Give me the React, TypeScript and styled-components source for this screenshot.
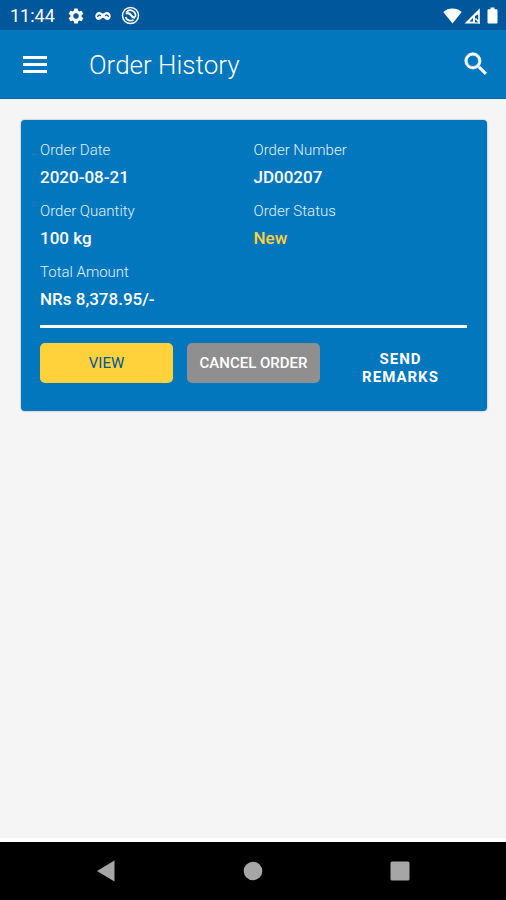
import React from "react";
import styled, { createGlobalStyle } from "styled-components";

const colors = {
  primary: "#0277bd",
  primaryDark: "#01579b",
  accent: "#ffd13b",
  page: "#f5f5f5",
  muted: "#8f8f8f",
  label: "#e1f1fc",
};

const GlobalStyle = createGlobalStyle`
  * { box-sizing: border-box; }
  body { margin: 0; background: ${colors.page}; font-family: Roboto, sans-serif; }
  button { font-family: inherit; cursor: pointer; }
`;

const Screen = styled.div`
  min-height: 100vh;
  display: flex;
  flex-direction: column;
  background: ${colors.page};
`;

const StatusBar = styled.div`
  height: 30px;
  flex: none;
  display: flex;
  align-items: center;
  justify-content: space-between;
  padding: 1px 8px 0 10px;
  color: #fff;
  background: ${colors.primaryDark};
`;

const StatusGroup = styled.div<{ $gap: number }>`
  display: flex;
  align-items: center;
  gap: ${(p) => p.$gap}px;
  svg { display: block; }
`;

const Clock = styled.time`
  font-size: 18px;
  line-height: 20px;
  margin-right: 2px;
`;

const AppBar = styled.header`
  flex: none;
  display: flex;
  align-items: center;
  height: 69px;
  padding: 0 15px 0 20px;
  color: #fff;
  background: ${colors.primary};
  border-bottom: 1px solid #0565a8;
`;

const Title = styled.h1`
  flex: 1;
  margin: 2px 0 0 39px;
  font-size: 26px;
  line-height: 32px;
  font-weight: 300;
`;

const IconButton = styled.button`
  padding: 0;
  border: 0;
  background: none;
  color: inherit;
  svg { display: block; }
`;

const Content = styled.main`
  flex: 1;
  padding: 21px 19px 20px 21px;
`;

const Card = styled.article`
  padding: 19px 20px 25px 19px;
  border-radius: 4px;
  color: #fff;
  background: ${colors.primary};
  box-shadow: 0 0 2px rgba(0, 0, 0, 0.4);
`;

const Fields = styled.dl`
  display: grid;
  grid-template-columns: 1fr 1fr;
  row-gap: 11px;
  margin: 0;
`;

const Label = styled.dt`
  font-size: 15px;
  line-height: 22px;
  margin-bottom: 4px;
  font-weight: 300;
  color: ${colors.label};
`;

const Value = styled.dd<{ $highlight?: boolean }>`
  margin: 0;
  font-size: 17px;
  line-height: 24px;
  font-weight: 500;
  color: ${(p) => (p.$highlight ? colors.accent : "#fff")};
`;

const Divider = styled.hr`
  height: 3px;
  margin: 14px 0 15px;
  border: 0;
  background: #fff;
`;

const Actions = styled.div`
  display: grid;
  grid-template-columns: repeat(3, minmax(0, 1fr));
  align-items: start;
  gap: 14px;
`;

const ActionButton = styled.button<{ $kind: "accent" | "muted" | "text" }>`
  min-height: 40px;
  padding: ${(p) => (p.$kind === "text" ? "7px 16px 0" : "0")};
  border: 0;
  border-radius: 5px;
  font-size: 15px;
  line-height: 18px;
  text-transform: uppercase;
  font-weight: ${(p) => (p.$kind === "accent" ? 400 : p.$kind === "muted" ? 500 : 700)};
  letter-spacing: ${(p) => (p.$kind === "text" ? "1px" : "normal")};
  color: ${(p) => (p.$kind === "accent" ? colors.primaryDark : "#fff")};
  background: ${(p) =>
    p.$kind === "accent" ? colors.accent : p.$kind === "muted" ? colors.muted : "transparent"};
`;

const NavBar = styled.nav`
  flex: none;
  display: grid;
  grid-template-columns: repeat(3, 1fr);
  place-items: center;
  height: 62px;
  padding: 0 33px;
  border-top: 4px solid #fff;
  background: #000;
  color: #a6a6a6;
`;

const GearIcon = () => (
  <svg width="18" height="18" viewBox="0 0 24 24" fill="currentColor" aria-hidden="true">
    <path d="M19.4 13a7.5 7.5 0 0 0 0-2l2.1-1.6a.5.5 0 0 0 .1-.7l-2-3.4a.5.5 0 0 0-.6-.2l-2.5 1a7.3 7.3 0 0 0-1.7-1l-.4-2.6a.5.5 0 0 0-.5-.5h-4a.5.5 0 0 0-.4.5l-.4 2.6a8 8 0 0 0-1.7 1l-2.5-1a.5.5 0 0 0-.6.2l-2 3.4a.5.5 0 0 0 .1.7L4.6 11a7.5 7.5 0 0 0 0 2l-2.1 1.6a.5.5 0 0 0-.1.7l2 3.4a.5.5 0 0 0 .6.2l2.5-1a7.3 7.3 0 0 0 1.7 1l.4 2.6c0 .3.2.5.5.5h4c.2 0 .4-.2.4-.5l.4-2.6a7.3 7.3 0 0 0 1.7-1l2.5 1c.2.1.5 0 .6-.2l2-3.4a.5.5 0 0 0-.1-.7zM12 15.6a3.6 3.6 0 1 1 0-7.2 3.6 3.6 0 0 1 0 7.2z" />
  </svg>
);

const LoopIcon = () => (
  <svg width="16" height="12" viewBox="0 0 16 12" aria-hidden="true">
    <path
      d="M4.300 2C6 2 7 3.400 8 3.400S10 2 11.700 2C14 2 15.700 3.800 15.700 6.200S14 10 12.200 10C10 10 9 7.800 8 7.800S6 10 3.800 10C2 10 .3 8.600.3 6.200S2 2 4.300 2z"
      fill="currentColor"
    />
    <path d="M2.600 7c.3-2 2.200-2.500 3.200-1M13.400 7c-.3-2-2.200-2.500-3.200-1" stroke={colors.primaryDark} strokeWidth="1.200" fill="none" />
  </svg>
);

const SwirlIcon = () => (
  <svg width="19" height="19" viewBox="0 0 19 19" fill="none" stroke="currentColor" aria-hidden="true">
    <circle cx="9.500" cy="9.500" r="8" strokeWidth="1.500" />
    <path d="M5.300 6.200a5.200 5.200 0 0 1 8.900 5M12.500 13.700a5.200 5.200 0 0 1-8-2.700" strokeWidth="1.700" />
    <path d="M4.800 7.500c2.500-.8 4.500.2 5.500 2s2 2.200 3.700 2" strokeWidth="2.200" />
  </svg>
);

const WifiIcon = () => (
  <svg width="19" height="16" viewBox="0 0 19 16" fill="currentColor" aria-label="Wi-Fi" role="img">
    <path d="M9.500 15.500.3 4C3 1.700 6 .6 9.500.6S16 1.700 18.700 4z" />
  </svg>
);

const SignalIcon = () => (
  <svg width="17" height="16" viewBox="0 0 17 16" aria-label="Mobile signal" role="img">
    <path d="M.5 15.500 15.800.3v5.200L11 8v7.500z" fill="currentColor" />
    <path d="M5.500 13.600h3.500V10z" fill={colors.primaryDark} />
    <path d="M15 5.500V14l-3.500-3.500" stroke="currentColor" strokeWidth="1.600" fill="none" />
    <path d="M11 15h5" stroke="currentColor" strokeWidth="1.200" />
  </svg>
);

const BatteryIcon = () => (
  <svg width="11" height="17" viewBox="0 0 11 17" fill="currentColor" aria-label="Battery" role="img">
    <path d="M3.500.5h4v1.700h1.700c.8 0 1.300.5 1.300 1.300v11.700c0 .8-.5 1.300-1.300 1.300H1.800c-.8 0-1.300-.5-1.300-1.300V3.500c0-.8.5-1.300 1.300-1.300h1.700z" />
  </svg>
);

const MenuIcon = () => (
  <svg width="30" height="30" viewBox="0 0 30 30" fill="currentColor" aria-hidden="true">
    <path d="M3 7h24v3H3zM3 14h24v3H3zM3 21h24v3H3z" />
  </svg>
);

const SearchIcon = () => (
  <svg width="30" height="30" viewBox="0 0 24 24" fill="currentColor" stroke="currentColor" strokeWidth=".5" aria-hidden="true">
    <path d="M15.5 14h-.79l-.28-.27A6.47 6.47 0 0 0 16 9.5 6.5 6.5 0 1 0 9.5 16c1.61 0 3.09-.59 4.23-1.57l.27.28v.79l5 4.99L20.49 19zm-6 0C7.01 14 5 11.99 5 9.5S7.01 5 9.5 5 14 7.01 14 9.5 11.99 14 9.5 14z" />
  </svg>
);

const BackIcon = () => (
  <svg width="20" height="22" viewBox="0 0 20 22" fill="currentColor" aria-hidden="true">
    <path d="M18.500.5v21L1 11z" />
  </svg>
);

const HomeIcon = () => (
  <svg width="20" height="20" viewBox="0 0 20 20" fill="currentColor" aria-hidden="true">
    <circle cx="10" cy="10" r="9.300" />
  </svg>
);

const RecentIcon = () => (
  <svg width="20" height="20" viewBox="0 0 20 20" fill="currentColor" aria-hidden="true">
    <rect x=".5" y=".5" width="19" height="19" rx="1.500" />
  </svg>
);

const order = [
  { label: "Order Date", value: "2020-08-21" },
  { label: "Order Number", value: "JD00207" },
  { label: "Order Quantity", value: "100 kg" },
  { label: "Order Status", value: "New", highlight: true },
  { label: "Total Amount", value: "NRs 8,378.95/-" },
];

export default function App() {
  return (
    <Screen>
      <GlobalStyle />
      <StatusBar>
        <StatusGroup $gap={10}>
          <Clock>11:44</Clock>
          <GearIcon />
          <LoopIcon />
          <SwirlIcon />
        </StatusGroup>
        <StatusGroup $gap={2}>
          <WifiIcon />
          <StatusGroup $gap={6}>
            <SignalIcon />
            <BatteryIcon />
          </StatusGroup>
        </StatusGroup>
      </StatusBar>
      <AppBar>
        <IconButton aria-label="Open menu">
          <MenuIcon />
        </IconButton>
        <Title>Order History</Title>
        <IconButton aria-label="Search orders">
          <SearchIcon />
        </IconButton>
      </AppBar>
      <Content>
        <Card>
          <Fields>
            {order.map((field) => (
              <div key={field.label}>
                <Label>{field.label}</Label>
                <Value $highlight={field.highlight}>{field.value}</Value>
              </div>
            ))}
          </Fields>
          <Divider />
          <Actions>
            <ActionButton $kind="accent">View</ActionButton>
            <ActionButton $kind="muted">Cancel Order</ActionButton>
            <ActionButton $kind="text">Send Remarks</ActionButton>
          </Actions>
        </Card>
      </Content>
      <NavBar>
        <IconButton aria-label="Back">
          <BackIcon />
        </IconButton>
        <IconButton aria-label="Home">
          <HomeIcon />
        </IconButton>
        <IconButton aria-label="Recent apps">
          <RecentIcon />
        </IconButton>
      </NavBar>
    </Screen>
  );
}
